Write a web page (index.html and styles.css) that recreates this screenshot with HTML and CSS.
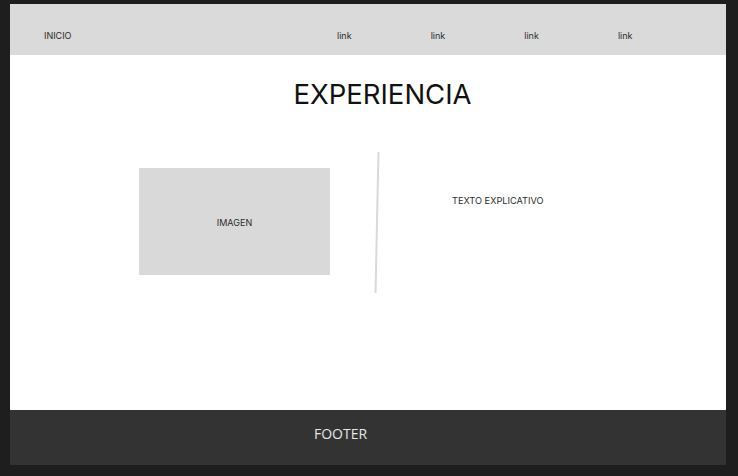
FILE: index.html
```
<!DOCTYPE html>
<html lang="es">
<head>
<meta charset="utf-8">
<title>Experiencia</title>
<link rel="stylesheet" href="styles.css">
</head>
<body>
<div class="frame">
  <header class="header">
    <span class="brand">INICIO</span>
    <nav class="nav">
      <a class="link">link</a>
      <a class="link">link</a>
      <a class="link">link</a>
      <a class="link">link</a>
    </nav>
  </header>
  <main class="main">
    <h1 class="title">EXPERIENCIA</h1>
    <section class="content">
      <div class="image">IMAGEN</div>
      <div class="divider"></div>
      <p class="text">TEXTO EXPLICATIVO</p>
    </section>
  </main>
  <footer class="footer">
    <span class="footer-text">FOOTER</span>
  </footer>
</div>
</body>
</html>
```
FILE: styles.css
```
html, body {
  margin: 0;
  padding: 0;
  background: #1e1e1e;
  font-family: Inter, "Liberation Sans", sans-serif;
}

.frame {
  width: 716px;
  margin: 4px 0 0 10px;
  display: flex;
  flex-direction: column;
}

.header {
  height: 51px;
  box-sizing: border-box;
  background: #dadada;
  display: flex;
  align-items: flex-start;
  padding: 26px 0 0 34px;
  font-size: 9px;
  line-height: 11px;
  color: #2b2b2b;
}

.brand {
  width: 293px;
}

.nav {
  display: flex;
  gap: 79px;
}

.link {
  color: #2b2b2b;
  text-decoration: none;
}

.main {
  height: 355px;
  background: #ffffff;
  display: flex;
  flex-direction: column;
}

.title {
  margin: 21px 0 0 0;
  padding-left: 29px;
  text-align: center;
  font-size: 27.5px;
  line-height: 36px;
  font-weight: 400;
  color: #111;
}

.content {
  display: flex;
  align-items: flex-start;
  margin-top: 40px;
  padding-left: 129px;
}

.image {
  margin-top: 16px;
  width: 191px;
  height: 107px;
  background: #d9d9d9;
  display: flex;
  align-items: center;
  justify-content: center;
  padding-top: 1px;
  box-sizing: border-box;
  font-size: 9px;
  color: #2b2b2b;
}

.divider {
  margin-left: 46px;
  width: 2px;
  height: 141px;
  background: #d9d9d9;
  transform: rotate(1.2deg);
}

.text {
  margin: 43px 0 0 74px;
  font-size: 9.2px;
  line-height: 11px;
  color: #2b2b2b;
}

.footer {
  height: 55px;
  background: #333333;
  padding-left: 304px;
  box-sizing: border-box;
  display: flex;
  align-items: center;
}

.footer-text {
  font-family: "Open Sans", sans-serif;
  font-size: 14px;
  color: #e6e6e6;
  margin-top: -9px;
}
```
